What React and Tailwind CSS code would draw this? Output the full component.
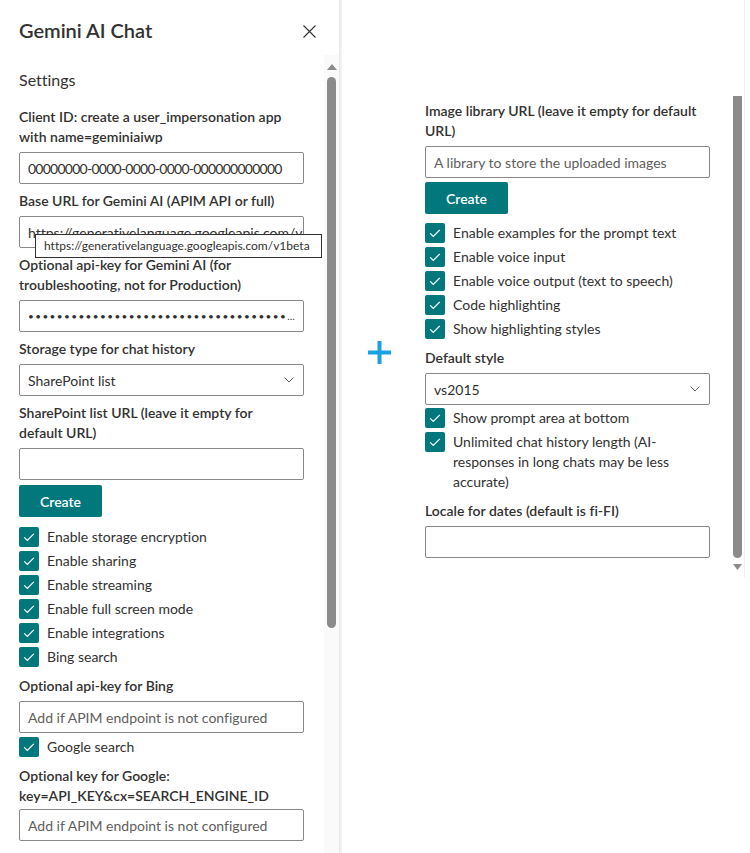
import React from 'react';

const FONT = { fontFamily: 'Lato, "Liberation Sans", sans-serif' };

const CheckIcon = () => (
  <svg width="20" height="20" viewBox="0 0 20 20" className="shrink-0">
    <rect width="20" height="20" rx="2" fill="#03787c" />
    <path d="M5.2 10.4l3.1 3.1 6.5-6.6" fill="none" stroke="#fff" strokeWidth="1.2" />
  </svg>
);

const Label = ({ children, pb = 'pb-[5px]', className = '' }) => (
  <div className={`pt-[7px] ${pb} text-[14px] leading-5 font-semibold text-[#323130] whitespace-nowrap ${className}`}>
    {children}
  </div>
);

const Input = ({ value, placeholder, valueClass = '' }) => (
  <div className="h-8 w-[285px] border border-[#8a8886] rounded-[2px] px-2 flex items-center text-[14px] overflow-hidden whitespace-nowrap">
    {value ? <span className={`text-[#323130] ${valueClass}`}>{value}</span> : <span className="text-[#605e5c]">{placeholder}</span>}
  </div>
);

const Select = ({ value }) => (
  <div className="h-8 w-[285px] border border-[#8a8886] rounded-[2px] pl-2 pr-[9px] flex items-center justify-between text-[14px] text-[#323130]">
    <span>{value}</span>
    <svg width="10" height="6" viewBox="0 0 10 6">
      <path d="M0.5 0.5l4.5 4.5 4.5-4.5" fill="none" stroke="#605e5c" strokeWidth="1" />
    </svg>
  </div>
);

const CreateButton = ({ className = 'mt-[5px]' }) => (
  <button className={`${className} h-8 w-[83px] rounded-[2px] bg-[#03787c] text-white text-[14px] font-semibold`}>Create</button>
);

const Check = ({ children, className = '' }) => (
  <div className={`flex items-start gap-2 ${className}`}>
    <div className="mt-[2px]"><CheckIcon /></div>
    <div className="pt-[2px] pb-[2px] text-[14px] leading-5 text-[#323130] whitespace-nowrap">{children}</div>
  </div>
);

const leftChecks = ['Enable storage encryption', 'Enable sharing', 'Enable streaming', 'Enable full screen mode', 'Enable integrations', 'Bing search'];
const rightChecks = ['Enable examples for the prompt text', 'Enable voice input', 'Enable voice output (text to speech)', 'Code highlighting', 'Show highlighting styles'];

export default function App() {
  return (
    <div style={FONT} className="flex h-[853px] w-[750px] overflow-hidden bg-white [font-variant-ligatures:none]">
      {/* settings panel */}
      <aside className="w-[339px] shrink-0 flex flex-col">
        <header className="h-[55px] shrink-0 flex items-start justify-between pl-[19px] pr-[23px] pt-[16px]">
          <h1 className="text-[20px] leading-7 font-semibold text-[#323130]">Gemini AI Chat</h1>
          <svg width="13" height="13" viewBox="0 0 13 13" className="mt-[9px]">
            <path d="M0.5 0.5l12 12M12.5 0.5l-12 12" stroke="#323130" strokeWidth="1.1" />
          </svg>
        </header>
        <div className="flex flex-1 min-h-0">
          <div className="w-[324px] pl-[19px] pt-[14px] overflow-hidden">
            <div className="text-[16px] leading-[22px] text-[#323130] mb-[9px]">Settings</div>
            <Label>Client ID: create a user_impersonation app<br />with name=geminiaiwp</Label>
            <Input value="00000000-0000-0000-0000-000000000000" valueClass="tracking-[-0.75px]" />
            <Label>Base URL for Gemini AI (APIM API or full)</Label>
            <div className="relative">
              <Input value="https://generativelanguage.googleapis.com/v1beta" />
              <div className="absolute left-4 top-[18px] h-6 w-[287px] border border-[#323130] bg-white px-2 flex items-center text-[12px] text-[#323130] whitespace-nowrap">
                https://generativelanguage.googleapis.com/v1beta
              </div>
            </div>
            <Label>Optional api-key for Gemini AI (for<br />troubleshooting, not for Production)</Label>
            <div className="h-8 w-[285px] border border-[#8a8886] rounded-[2px] pl-2 pr-[6px] flex items-center text-[10px] text-[#323130]">
              <span className="truncate tracking-[1.4px]">{'•'.repeat(80)}</span>
            </div>
            <Label>Storage type for chat history</Label>
            <Select value="SharePoint list" />
            <Label>SharePoint list URL (leave it empty for<br />default URL)</Label>
            <Input value="" placeholder="" />
            <CreateButton />
            <div className="mt-[8px]">
              {leftChecks.map(t => <Check key={t}>{t}</Check>)}
            </div>
            <Label>Optional api-key for Bing</Label>
            <Input placeholder="Add if APIM endpoint is not configured" />
            <Check className="mt-[2px]">Google search</Check>
            <Label pb="pb-[3px]">Optional key for Google:<br />key=API_KEY&amp;cx=SEARCH_ENGINE_ID</Label>
            <Input placeholder="Add if APIM endpoint is not configured" />
          </div>
          {/* scrollbar */}
          <div className="w-[15px] bg-[#fafafa] flex flex-col items-center pt-[9px]">
            <svg width="10" height="6" viewBox="0 0 10 6"><path d="M5 0L10 6H0z" fill="#8b8b8b" /></svg>
            <div className="mt-[7px] h-[551px] w-[9px] rounded-full bg-[#8b8b8b]" />
          </div>
        </div>
      </aside>
      <div className="w-[3px] shrink-0 bg-gradient-to-r from-[#e5e5e5] to-[#f7f7f7]" />

      {/* continuation */}
      <main className="flex flex-1">
        <div className="w-[83px] shrink-0 pl-[26px] pt-[341px]">
          <svg width="23" height="23" viewBox="0 0 23 23">
            <rect x="9.5" y="0" width="4" height="23" fill="#1aa0e4" />
            <rect x="0" y="9.5" width="23" height="4" fill="#1aa0e4" />
          </svg>
        </div>
        <div className="w-[285px] shrink-0 pt-[94px]">
          <Label>Image library URL (leave it empty for default<br />URL)</Label>
          <Input placeholder="A library to store the uploaded images" />
          <CreateButton className="mt-[4px]" />
          <div className="mt-[7px]">
            {rightChecks.map(t => <Check key={t}>{t}</Check>)}
          </div>
          <Label>Default style</Label>
          <Select value="vs2015" />
          <Check className="mt-[1px]">Show prompt area at bottom</Check>
          <Check>Unlimited chat history length (AI-<br />responses in long chats may be less<br />accurate)</Check>
          <Label>Locale for dates (default is fi-FI)</Label>
          <Input value="" placeholder="" />
        </div>
        <div className="ml-[23px] w-[12px] shrink-0 pt-[96px] flex flex-col items-start border-r border-[#f0f0f0] h-[578px]">
          <div className="h-[462px] w-[9px] rounded-b-full bg-[#8b8b8b]" />
          <svg width="9" height="6" viewBox="0 0 9 6" className="mt-[6px]"><path d="M0 0H9L4.5 6z" fill="#8b8b8b" /></svg>
        </div>
      </main>
    </div>
  );
}
